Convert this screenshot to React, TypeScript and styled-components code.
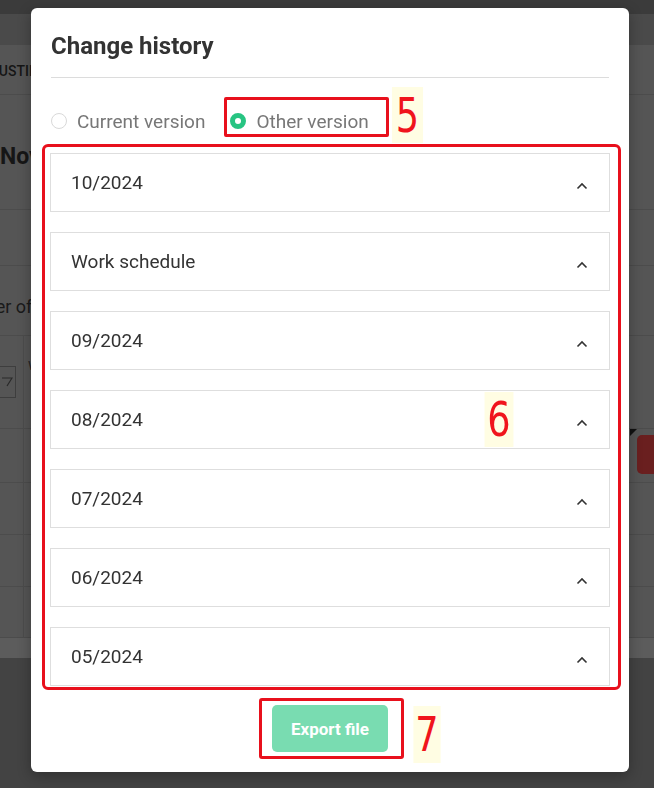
import React from 'react'
import styled, { createGlobalStyle } from 'styled-components'

const GlobalStyle = createGlobalStyle`
  html, body {
    margin: 0;
    padding: 0;
  }
  body {
    width: 654px;
    height: 788px;
    overflow: hidden;
    background: #444;
    font-family: Roboto, 'Liberation Sans', sans-serif;
  }
`

// ---- dimmed page behind the dialog ----
const Page = styled.div`
  width: 654px;
  height: 788px;
  display: flex;
  flex-direction: column;
  background: #555;
  overflow: hidden;
`
const TopBar = styled.div`
  flex: none;
  height: 14px;
  background: #3b3b3b;
`
const SubBar = styled.div`
  flex: none;
  height: 31px;
  background: #4a4a4a;
`
const Tabs = styled.div`
  flex: none;
  height: 50px;
  display: flex;
  align-items: center;
  font-size: 14px;
  font-weight: 500;
  color: #151515;
  text-indent: -9px;
  padding-top: 2px;
  box-sizing: border-box;
  border-bottom: 1px solid #4c4c4c;
`
const PageTitle = styled.div`
  flex: none;
  height: 115px;
  display: flex;
  align-items: center;
  font-size: 23px;
  font-weight: 700;
  color: #161616;
  padding-top: 8px;
  box-sizing: border-box;
  border-bottom: 1px solid #4c4c4c;
`
const Band = styled.div<{ h: number }>`
  flex: none;
  height: ${(p) => p.h}px;
  display: flex;
  align-items: center;
  box-sizing: border-box;
  border-bottom: 1px solid #4c4c4c;
  font-size: 18px;
  color: #1a1a1a;
`
const Indented = styled.span`
  margin-left: -53px;
  padding-top: 12px;
`
const Table = styled.div`
  flex: none;
  display: flex;
  flex-direction: column;
`
const TableRow = styled.div<{ h: number }>`
  height: ${(p) => p.h}px;
  display: flex;
  box-sizing: border-box;
  border-bottom: 1px solid #4c4c4c;
`
const FirstCell = styled.div`
  width: 23px;
  flex: none;
  border-right: 1px solid #4c4c4c;
  display: flex;
  align-items: center;
`
const FilterBox = styled.div`
  width: 30px;
  height: 32px;
  margin-left: -14px;
  border: 1px solid #3e3e3e;
  box-sizing: border-box;
  display: flex;
  align-items: center;
  justify-content: flex-end;
  padding-right: 2px;
`
const HeadText = styled.div`
  padding: 22px 0 0 4px;
  font-size: 13px;
  color: #222;
`
const RightCell = styled.div`
  margin-left: auto;
  position: relative;
  padding-top: 6px;
`
const DangerBtn = styled.div`
  width: 30px;
  height: 39px;
  margin-right: -13px;
  background: #6a1f1f;
  border-radius: 5px;
`
const CornerMark = styled.div`
  position: absolute;
  left: -7px;
  top: 0;
  width: 0;
  height: 0;
  border-top: 7px solid #111;
  border-right: 7px solid transparent;
`
const FootBand = styled.div`
  flex: none;
  height: 20px;
  background: #5c5c5c;
`
const PageRest = styled.div`
  flex: 1;
  background: #434343;
`

// ---- dialog ----
const Modal = styled.div`
  position: fixed;
  top: 8px;
  left: 31px;
  width: 598px;
  height: 764px;
  box-sizing: border-box;
  padding: 0 20px 13px;
  background: #fff;
  border-radius: 6px;
  box-shadow: 0 4px 14px rgba(0, 0, 0, 0.3);
  display: flex;
  flex-direction: column;
`
const Header = styled.div`
  padding: 24px 0 17px;
  font-size: 24px;
  line-height: 28px;
  font-weight: 700;
  color: #333;
  border-bottom: 1px solid #dcdcdc;
`
const RadioRow = styled.div`
  margin-top: 19px;
  height: 40px;
  display: flex;
  align-items: center;
  gap: 19px;
`
const Option = styled.label<{ marked?: boolean }>`
  position: relative;
  height: 40px;
  display: flex;
  align-items: center;
  gap: 10px;
  padding-top: 8px;
  font-size: 19px;
  color: #777;
  box-sizing: border-box;
  ${(p) =>
    p.marked
      ? `border: 3px solid #e8101c; border-radius: 2px; padding: 8px 17px 0 3px;`
      : ''}
`
const Radio = styled.span<{ checked?: boolean }>`
  width: 16px;
  height: 16px;
  border-radius: 50%;
  box-sizing: border-box;
  flex: none;
  border: ${(p) => (p.checked ? '5px solid #27c482' : '1px solid #d9d9d9')};
  background: #fff;
`
const Tag = styled.div<{ left: string; top: number; w: number; h: number }>`
  position: absolute;
  left: ${(p) => p.left};
  top: ${(p) => p.top}px;
  width: ${(p) => p.w}px;
  height: ${(p) => p.h}px;
  background: #fffde3;
  color: #f0141c;
  font-family: 'DejaVu Sans', 'Liberation Sans', sans-serif;
  font-stretch: condensed;
  font-size: 48px;
  line-height: ${(p) => p.h}px;
  text-align: center;
  transform: scaleX(0.85);
`
const ListFrame = styled.div`
  position: relative;
  margin: 7px -12px 0 -9px;
  padding: 6px 8px 1px 5px;
  border: 3px solid #e8101c;
  border-radius: 6px;
  display: flex;
  flex-direction: column;
  gap: 20px;
  height: 546px;
  box-sizing: border-box;
  overflow: hidden;
`
const Item = styled.div`
  flex: none;
  height: 59px;
  box-sizing: border-box;
  border: 1px solid #dedede;
  display: flex;
  align-items: center;
  justify-content: space-between;
  padding: 0 21px 0 20px;
  font-size: 19px;
  font-weight: 400;
  color: #333;
`
const Chevron = styled.svg`
  margin-top: 6px;
`
const Footer = styled.div`
  margin-top: 8px;
  display: flex;
  justify-content: center;
`
const ExportFrame = styled.div`
  position: relative;
  margin-left: 3px;
  padding: 4px 13px 4px 10px;
  border: 3px solid #e8101c;
  border-radius: 3px;
`
const ExportBtn = styled.button`
  width: 116px;
  height: 47px;
  border: none;
  border-radius: 5px;
  background: #79dcb1;
  color: #fff;
  font-family: Roboto, 'Liberation Sans', sans-serif;
  font-size: 17px;
  font-weight: 700;
`

const groups = ['10/2024', 'Work schedule', '09/2024', '08/2024', '07/2024', '06/2024', '05/2024']

const App = () => {
  return (
    <>
      <GlobalStyle />
      <Page>
        <TopBar />
        <SubBar />
        <Tabs>JUSTIFICATION</Tabs>
        <PageTitle>November</PageTitle>
        <Band h={56} />
        <Band h={70}>
          <Indented>Number of days</Indented>
        </Band>
        <Table>
          <TableRow h={93}>
            <FirstCell>
              <FilterBox>
                <svg width="12" height="12" viewBox="0 0 12 12">
                  <path d="M1 2 H11 L6 10" fill="none" stroke="#2a2a2a" strokeWidth="1.2" />
                </svg>
              </FilterBox>
            </FirstCell>
            <HeadText>W</HeadText>
          </TableRow>
          <TableRow h={54}>
            <FirstCell />
            <RightCell>
              <CornerMark />
              <DangerBtn />
            </RightCell>
          </TableRow>
          <TableRow h={52}>
            <FirstCell />
          </TableRow>
          <TableRow h={52}>
            <FirstCell />
          </TableRow>
          <TableRow h={51}>
            <FirstCell />
          </TableRow>
        </Table>
        <FootBand />
        <PageRest />
      </Page>

      <Modal>
        <Header>Change history</Header>
        <RadioRow>
          <Option>
            <Radio />
            Current version
          </Option>
          <Option marked>
            <Radio checked />
            Other version
            <Tag left="calc(100% + 3px)" top={-13} w={37} h={56}>
              5
            </Tag>
          </Option>
        </RadioRow>
        <ListFrame>
          {groups.map((g) => (
            <Item key={g}>
              {g}
              <Chevron width="12" height="8" viewBox="0 0 12 8">
                <path d="M1.5 6.5 L6 2 L10.5 6.5" fill="none" stroke="#333" strokeWidth="1.6" />
              </Chevron>
            </Item>
          ))}
          <Tag left="437px" top={245} w={34} h={55}>
            6
          </Tag>
        </ListFrame>
        <Footer>
          <ExportFrame>
            <ExportBtn>Export file</ExportBtn>
            <Tag left="calc(100% + 10px)" top={5} w={32} h={57}>
              7
            </Tag>
          </ExportFrame>
        </Footer>
      </Modal>
    </>
  )
}

export default App
